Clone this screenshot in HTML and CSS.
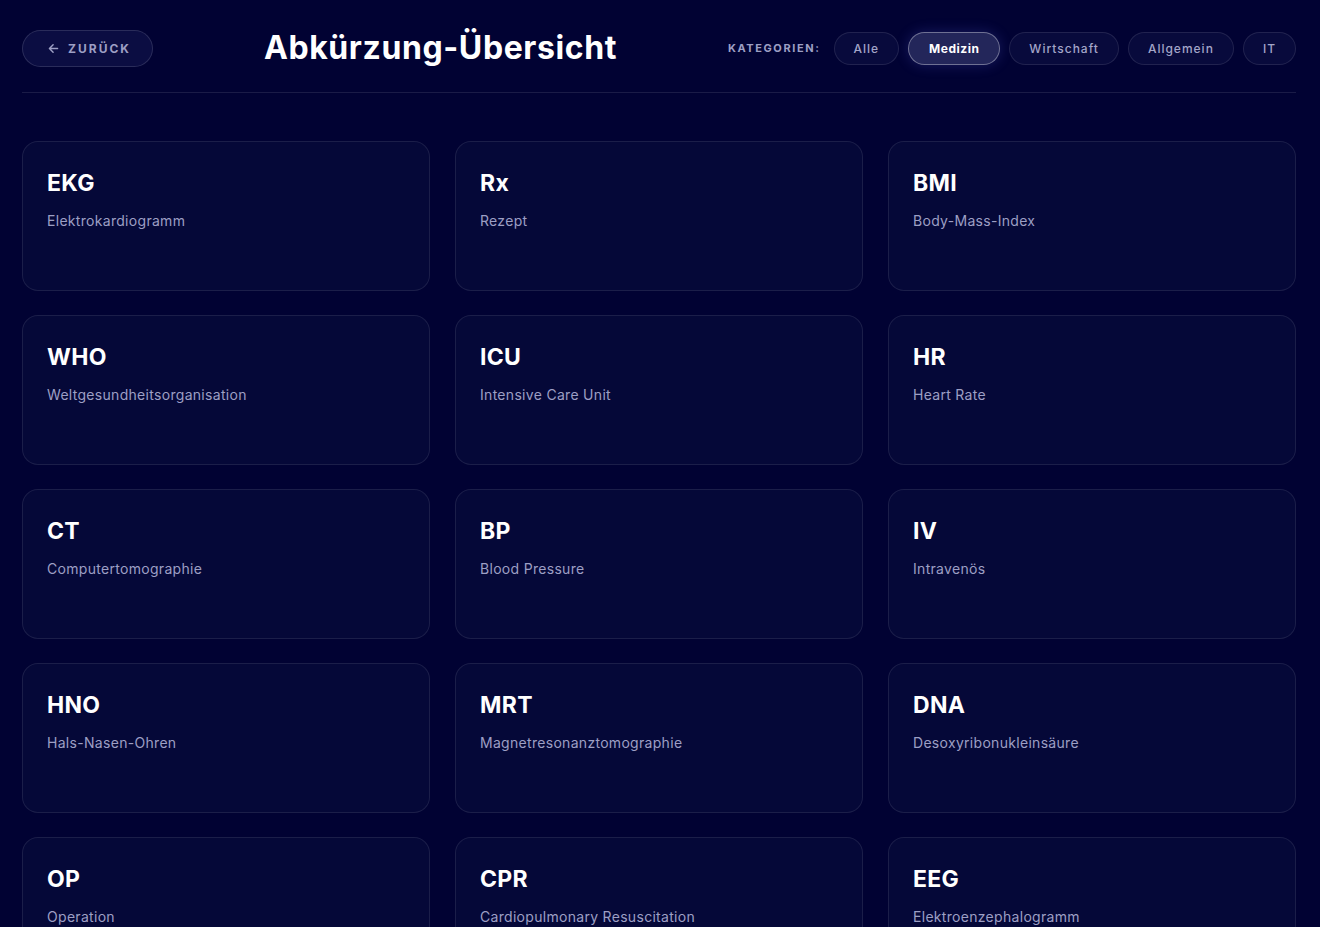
FILE: index.html
```html
<!DOCTYPE html>
<html lang="de">
<head>
<meta charset="utf-8">
<title>Abkürzung-Übersicht</title>
<link rel="stylesheet" href="styles.css">
</head>
<body>
<div class="page">
  <header class="header">
    <button class="back">
      <svg class="back-icon" viewBox="0 0 16 16" width="13" height="13" fill="none" stroke="currentColor" stroke-width="1.8" stroke-linecap="round" stroke-linejoin="round"><path d="M13 8H3.5M7.5 3.5L3 8l4.5 4.5"/></svg>
      <span>ZURÜCK</span>
    </button>
    <h1 class="title">Abkürzung-Übersicht</h1>
    <nav class="cats">
      <span class="cats-label">KATEGORIEN:</span>
      <button class="chip">Alle</button>
      <button class="chip active">Medizin</button>
      <button class="chip">Wirtschaft</button>
      <button class="chip">Allgemein</button>
      <button class="chip">IT</button>
    </nav>
  </header>
  <main class="grid">
    <div class="card"><h2>EKG</h2><p>Elektrokardiogramm</p></div>
    <div class="card"><h2>Rx</h2><p>Rezept</p></div>
    <div class="card"><h2>BMI</h2><p>Body-Mass-Index</p></div>
    <div class="card"><h2>WHO</h2><p>Weltgesundheitsorganisation</p></div>
    <div class="card"><h2>ICU</h2><p>Intensive Care Unit</p></div>
    <div class="card"><h2>HR</h2><p>Heart Rate</p></div>
    <div class="card"><h2>CT</h2><p>Computertomographie</p></div>
    <div class="card"><h2>BP</h2><p>Blood Pressure</p></div>
    <div class="card"><h2>IV</h2><p>Intravenös</p></div>
    <div class="card"><h2>HNO</h2><p>Hals-Nasen-Ohren</p></div>
    <div class="card"><h2>MRT</h2><p>Magnetresonanztomographie</p></div>
    <div class="card"><h2>DNA</h2><p>Desoxyribonukleinsäure</p></div>
    <div class="card"><h2>OP</h2><p>Operation</p></div>
    <div class="card"><h2>CPR</h2><p>Cardiopulmonary Resuscitation</p></div>
    <div class="card"><h2>EEG</h2><p>Elektroenzephalogramm</p></div>
  </main>
</div>
</body>
</html>
```
FILE: styles.css
```css
* { box-sizing: border-box; }
html, body {
  margin: 0;
  background: #010233;
  color: #ffffff;
  font-family: Inter, "Liberation Sans", sans-serif;
}
.page {
  padding: 0 24px 0 22px;
}
.header {
  display: flex;
  align-items: center;
  justify-content: space-between;
  padding: 29px 0 25px;
  border-bottom: 1px solid rgba(255, 255, 255, 0.1);
}
.back {
  display: flex;
  align-items: center;
  gap: 8px;
  width: 131px;
  height: 37px;
  padding: 0 0 0 24px;
  border-radius: 999px;
  border: 1px solid rgba(255, 255, 255, 0.13);
  background: #0b0d42;
  color: #9d9fc4;
  font-family: Inter, sans-serif;
  font-size: 12px;
  font-weight: 700;
  letter-spacing: 2px;
}
.back-icon { flex: none; }
.title {
  margin: 0;
  font-size: 32px;
  font-weight: 700;
  letter-spacing: 0.6px;
  line-height: 38px;
}
.cats {
  display: flex;
  align-items: center;
  gap: 9px;
}
.cats-label {
  color: #9d9fc4;
  font-size: 11px;
  font-weight: 700;
  letter-spacing: 1.6px;
  margin-right: 4px;
}
.chip {
  height: 33px;
  padding: 0 19px;
  border-radius: 999px;
  border: 1px solid rgba(255, 255, 255, 0.1);
  background: #080a3c;
  color: #a3a5c8;
  font-family: Inter, sans-serif;
  font-size: 12px;
  font-weight: 500;
  letter-spacing: 1px;
}
.chip.active {
  padding: 0 20px;
  background: #23265a;
  border-color: rgba(255, 255, 255, 0.35);
  color: #ffffff;
  font-weight: 700;
  letter-spacing: 0.5px;
  box-shadow: 0 0 14px rgba(110, 120, 255, 0.22);
}
.grid {
  display: grid;
  grid-template-columns: repeat(3, 1fr);
  gap: 24px 25px;
  margin-top: 48px;
}
.card {
  min-height: 150px;
  padding: 27px 24px 24px;
  border-radius: 16px;
  border: 1px solid rgba(255, 255, 255, 0.09);
  background: #050838;
}
.card h2 {
  margin: 0;
  font-size: 23px;
  font-weight: 700;
  line-height: 28px;
  letter-spacing: 0.3px;
}
.card p {
  margin: 14px 0 0;
  font-size: 14px;
  line-height: 20px;
  color: #9d9fc4;
  letter-spacing: 0.3px;
}
```
